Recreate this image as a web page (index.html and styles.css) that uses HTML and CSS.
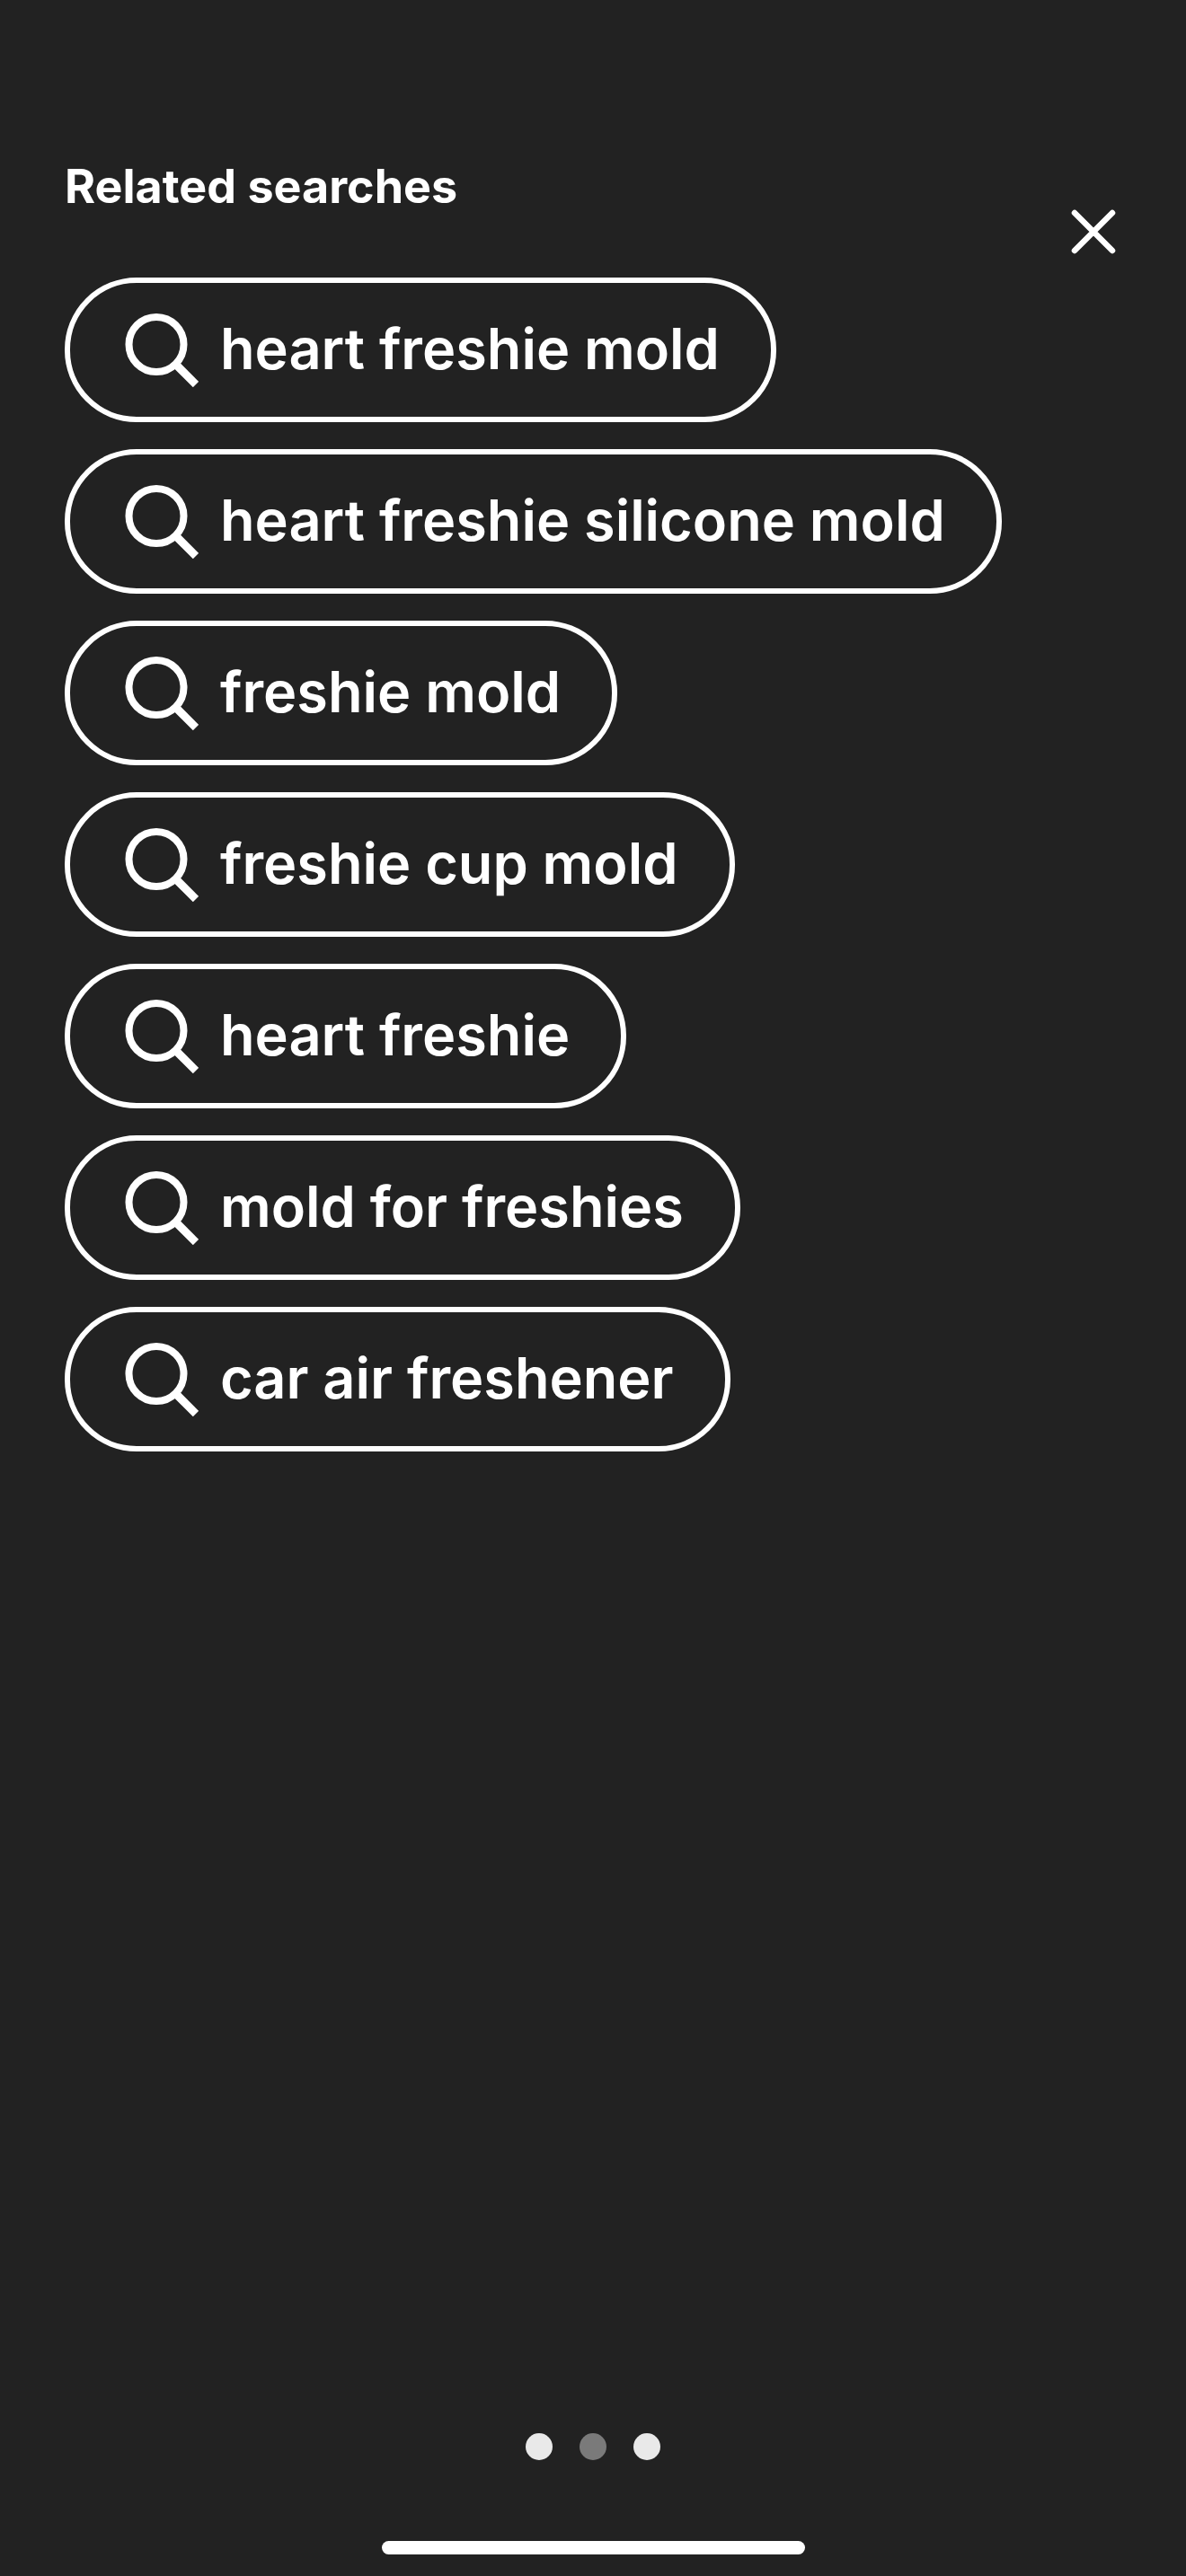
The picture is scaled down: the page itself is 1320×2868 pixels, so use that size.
FILE: index.html
```html
<!doctype html>
<html lang="en">
  <head>
    <meta charset="UTF-8" />
    <title>Related searches</title>
    <link rel="stylesheet" href="styles.css">
  </head>
  <body>
    <svg width="0" height="0" class="sprite">
      <symbol id="search" viewBox="0 0 82 82">
        <circle cx="35" cy="34.5" r="30.5" fill="none" stroke="currentColor" stroke-width="8" />
        <path d="M57 57 L79 79" fill="none" stroke="currentColor" stroke-width="9" />
      </symbol>
    </svg>

    <header class="top">
      <h1 class="title">Related searches</h1>
      <button class="close" aria-label="Close">
        <svg viewBox="0 0 50 50" width="50" height="50">
          <path d="M4 4 L46 46 M46 4 L4 46" fill="none" stroke="currentColor" stroke-width="6.5" stroke-linecap="round" />
        </svg>
      </button>
    </header>

    <ul class="pills">
      <li class="pill"><svg class="pill-icon"><use href="#search" /></svg>heart freshie mold</li>
      <li class="pill"><svg class="pill-icon"><use href="#search" /></svg>heart freshie silicone mold</li>
      <li class="pill"><svg class="pill-icon"><use href="#search" /></svg>freshie mold</li>
      <li class="pill"><svg class="pill-icon"><use href="#search" /></svg>freshie cup mold</li>
      <li class="pill"><svg class="pill-icon"><use href="#search" /></svg>heart freshie</li>
      <li class="pill"><svg class="pill-icon"><use href="#search" /></svg>mold for freshies</li>
      <li class="pill"><svg class="pill-icon"><use href="#search" /></svg>car air freshener</li>
    </ul>

    <footer class="bottom">
      <div class="dots">
        <span class="dot"></span>
        <span class="dot dot-dim"></span>
        <span class="dot"></span>
      </div>
      <div class="home-bar"></div>
    </footer>
  </body>
</html>
```

FILE: styles.css
```css
:root {
  --foreground: #ffffff;
  --background: #222222;
}
body {
  margin: 0;
  padding: 0 72px 24px;
  box-sizing: border-box;
  height: 100vh;
  display: flex;
  flex-direction: column;
  background-color: var(--background);
  font-family: Inter, "Liberation Sans", sans-serif;
  color: var(--foreground);
  overflow: hidden;
}
.sprite {
  display: none;
}

.top {
  display: flex;
  justify-content: space-between;
  align-items: flex-start;
  height: 309px;
  box-sizing: border-box;
  padding-top: 178px;
}
.title {
  margin: 0;
  font-size: 52px;
  line-height: 60px;
  font-weight: 700;
}
.close {
  margin: 55px 6px 0 0;
  padding: 0;
  width: 50px;
  height: 50px;
  border: 0;
  background: none;
  color: var(--foreground);
}
.close svg {
  display: block;
}

.pills {
  list-style: none;
  margin: 0;
  padding: 0;
  display: flex;
  flex-direction: column;
  align-items: flex-start;
  gap: 30px;
}
.pill {
  display: flex;
  align-items: center;
  gap: 24px;
  box-sizing: border-box;
  height: 161px;
  padding: 0 57px 3px 61px;
  border: 6px solid var(--foreground);
  border-radius: 80px;
  font-size: 63px;
  font-weight: 600;
  white-space: nowrap;
}
.pill-icon {
  width: 82px;
  height: 82px;
  flex-shrink: 0;
  margin-top: 3px;
}

.bottom {
  margin-top: auto;
  display: flex;
  flex-direction: column;
  align-items: center;
}
.dots {
  display: flex;
  gap: 30px;
  margin-bottom: 90px;
}
.dot {
  width: 30px;
  height: 30px;
  border-radius: 50%;
  background-color: #e9e9e9;
}
.dot-dim {
  background-color: #7a7a7a;
}
.home-bar {
  width: 471px;
  height: 15px;
  border-radius: 8px;
  background-color: var(--foreground);
}
```
